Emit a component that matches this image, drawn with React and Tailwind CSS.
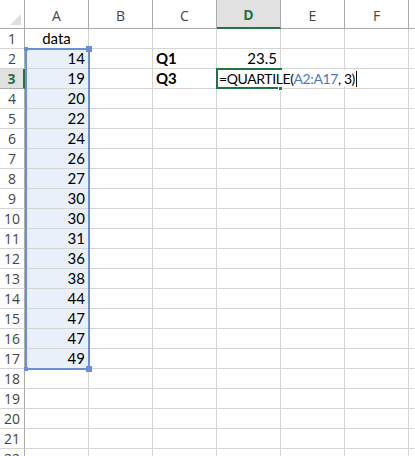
const DATA = [14, 19, 20, 22, 24, 26, 27, 30, 30, 31, 36, 38, 44, 47, 47, 49];
const COLS = ["A", "B", "C", "D", "E", "F", "G"];
const ROWS = Array.from({ length: 22 }, (_, i) => i + 1);

function Cell({ col, row }) {
  const inRange = col === "A" && row >= 2 && row <= 17;
  const active = col === "D" && row === 3;
  let content = null;
  if (col === "A" && row === 1) content = <span className="block text-center">data</span>;
  if (inRange) content = <span className="block text-right pr-[3px]">{DATA[row - 2]}</span>;
  if (col === "C" && row === 2) content = <span className="font-bold pl-[3px]">Q1</span>;
  if (col === "C" && row === 3) content = <span className="font-bold pl-[3px]">Q3</span>;
  if (col === "D" && row === 2) content = <span className="block text-right pr-[3px]">23.5</span>;

  return (
    <div
      className={`relative w-[64px] shrink-0 h-full border-r border-b border-[#d4d4d4] leading-[19px] ${
        inRange ? "bg-[#eaf0fa]" : ""
      } ${active ? "overflow-visible z-10" : "overflow-hidden"}`}
    >
      {content}
      {active && (
        <>
          {/* active cell frame + fill handle */}
          <div className="absolute -left-[1px] -top-[1px] w-[66px] h-[21px] border-2 border-[#217346]" />
          <div className="absolute left-[61px] top-[17px] w-[5px] h-[5px] bg-[#217346] border border-white" />
          <span className="absolute left-[2px] top-[1px] h-[16px] leading-[17px] whitespace-nowrap text-black bg-white text-[14px] tracking-[-0.4px]">
            =QUARTILE(<span className="text-[#4a78c8]">A2:A17</span>, 3)
            <span className="inline-block w-[1px] h-[16px] bg-black align-[-3px] ml-[1px]" />
          </span>
        </>
      )}
    </div>
  );
}

export default function App() {
  return (
    <div className="w-[415px] h-[456px] overflow-hidden bg-white text-[15px] text-black font-['Lato','Liberation_Sans',sans-serif]">
      <div className="relative">
        {/* column headers */}
        <div className="flex h-[29px]">
          <div className="relative w-[25px] shrink-0 border-r border-b border-[#ababab] bg-white">
            <div className="absolute right-[3px] bottom-[3px] w-0 h-0 border-l-[11px] border-l-transparent border-b-[11px] border-b-[#dfdfdf]" />
          </div>
          {COLS.map((c) => (
            <div
              key={c}
              className={`w-[64px] shrink-0 flex items-center justify-center pt-[2px] border-r ${
                c === "D"
                  ? "bg-[#e1e1e1] text-[#217346] font-bold border-b-2 border-b-[#217346] border-r-[#ababab]"
                  : "bg-white text-[#444] border-b border-[#ababab]"
              }`}
            >
              <span className="font-['Open_Sans','Liberation_Sans',sans-serif] text-[14px]">{c}</span>
            </div>
          ))}
        </div>

        {/* rows */}
        {ROWS.map((r) => (
          <div key={r} className="flex h-[20px]">
            <div
              className={`w-[25px] shrink-0 h-full flex items-center justify-center text-[14px] font-['Open_Sans','Liberation_Sans',sans-serif] border-b ${
                r === 3
                  ? "bg-[#e1e1e1] text-[#217346] font-bold border-r-2 border-r-[#217346] border-b-[#ababab]"
                  : "text-[#444] border-r border-[#ababab] border-b-[#d4d4d4]"
              }`}
            >
              {r}
            </div>
            {COLS.map((c) => (
              <Cell key={c} col={c} row={r} />
            ))}
          </div>
        ))}

        {/* range highlight A2:A17 */}
        <div className="absolute left-[25px] top-[48px] w-[65px] h-[322px] border-2 border-[#6b8fd0] pointer-events-none">
          <div className="absolute -left-[3px] -top-[3px] w-[4px] h-[4px] bg-[#6b8fd0]" />
          <div className="absolute -right-[4px] -top-[4px] w-[6px] h-[6px] bg-[#6b8fd0]" />
          <div className="absolute -left-[3px] -bottom-[3px] w-[4px] h-[4px] bg-[#6b8fd0]" />
          <div className="absolute -right-[4px] -bottom-[4px] w-[6px] h-[6px] bg-[#6b8fd0]" />
        </div>
      </div>
    </div>
  );
}
